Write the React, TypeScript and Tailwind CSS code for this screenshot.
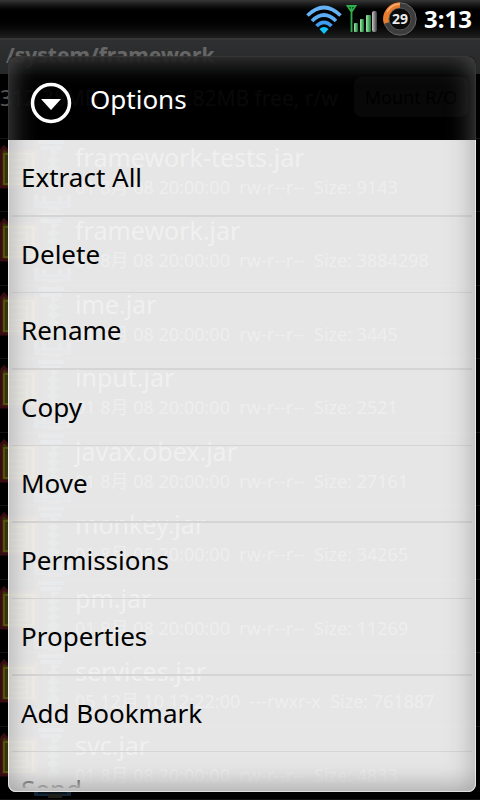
const files = [
  ['framework-tests.jar', '01 8月 08 20:00:00', 'rw-r--r--', '9143'],
  ['framework.jar', '01 8月 08 20:00:00', 'rw-r--r--', '3884298'],
  ['ime.jar', '01 8月 08 20:00:00', 'rw-r--r--', '3445'],
  ['input.jar', '01 8月 08 20:00:00', 'rw-r--r--', '2521'],
  ['javax.obex.jar', '01 8月 08 20:00:00', 'rw-r--r--', '27161'],
  ['monkey.jar', '01 8月 08 20:00:00', 'rw-r--r--', '34265'],
  ['pm.jar', '01 8月 08 20:00:00', 'rw-r--r--', '11269'],
  ['services.jar', '05 12月 10 12:22:00', '---rwxr-x', '761887'],
  ['svc.jar', '01 8月 08 20:00:00', 'rw-r--r--', '4833'],
];

const options = [
  'Extract All',
  'Delete',
  'Rename',
  'Copy',
  'Move',
  'Permissions',
  'Properties',
  'Add Bookmark',
  'Send',
];

function ArchiveIcon() {
  return (
    <svg viewBox="0 0 72 72" className="h-[72px] w-[72px] shrink-0" aria-hidden="true">
      <path d="M1 12 L4 8 L7 11 L37 12 V48 H1 Z" fill="#8a7a20" stroke="#8c2028" strokeWidth="3" />
      <path d="M4 45 V15 H33 V45 Z M9 40 H27 V21 H9 Z M9 28 H25 M9 34 H25" fill="none" stroke="#d8c824" strokeWidth="2" />
      <g opacity="0.75">
        <path d="M38 3 H64 M40 9 H62" stroke="#7494ac" strokeWidth="4" />
        <path d="M50 10 L60 13 L54 17 L60 21 L54 25 L60 29 L54 33 L60 37 L54 41 L60 45 L56 51 H50 L47 45 L52 41 L47 37 L52 33 L47 29 L52 25 L47 21 L52 17 Z" fill="#7c94a4" />
        <path d="M36 64 V56 M44 64 V57 M60 64 V57 M69 64 V56" stroke="#7494ac" strokeWidth="4" />
      </g>
      <path d="M34 62 H71 V69 H34 Z" fill="#2e6090" />
      <path d="M38 66 H67" stroke="#16304c" strokeWidth="2" />
      <path d="M48 67 H62 V71 H48 Z" fill="#4c5440" />
    </svg>
  );
}

function WifiIcon() {
  return (
    <svg viewBox="0 0 36 30" className="h-[30px] w-9" aria-hidden="true">
      <path d="M1.500 11.500 Q18 -4.500 34.500 11.500" fill="none" stroke="#66b2f6" strokeWidth="3.6" />
      <path d="M6 17 Q18 5 30 17" fill="none" stroke="#5cacf4" strokeWidth="3.6" />
      <path d="M10.500 22 Q18 14.500 25.500 22" fill="none" stroke="#3d9cf0" strokeWidth="3.6" />
      <path d="M13.500 25 Q18 21 22.500 25 L18 30 Z" fill="#12c4fa" />
    </svg>
  );
}

function SignalIcon() {
  return (
    <svg viewBox="0 0 32 30" className="h-[30px] w-8" aria-hidden="true">
      <defs>
        <linearGradient id="bar" x1="0" y1="0" x2="1" y2="0">
          <stop offset="0" stopColor="#a4e8b0" />
          <stop offset="1" stopColor="#0f7a2c" />
        </linearGradient>
        <linearGradient id="idle" x1="0" y1="0" x2="1" y2="0">
          <stop offset="0" stopColor="#c8c8c8" />
          <stop offset="1" stopColor="#3a3a3a" />
        </linearGradient>
      </defs>
      <path d="M1.500 2 H9.500 L5.500 8 Z M5.500 2 V28" fill="none" stroke="#2fae4c" strokeWidth="1.800" />
      <rect x="8" y="19" width="4" height="9" rx="1" fill="url(#bar)" />
      <rect x="14" y="15" width="4" height="13" rx="1" fill="url(#bar)" />
      <rect x="20" y="11" width="5" height="17" rx="1" fill="url(#bar)" />
      <rect x="26" y="7" width="5" height="21" rx="2" fill="url(#idle)" />
    </svg>
  );
}

function BatteryIcon() {
  return (
    <svg viewBox="0 0 36 36" className="h-9 w-9" role="img" aria-label="Battery 29 percent">
      <circle cx="18" cy="18" r="13.500" fill="#0a0a0a" stroke="#3c3c3c" strokeWidth="5" />
      <circle cx="18" cy="18" r="16.200" fill="none" stroke="#6a6a6a" strokeWidth="1" />
      <circle cx="18" cy="18" r="11" fill="none" stroke="#555" strokeWidth="1" />
      <path d="M18 4 A14 14 0 0 0 4.500 22" fill="none" stroke="#e87c2c" strokeWidth="5.500" />
      <path d="M18 3 A15 15 0 0 0 5 11" fill="none" stroke="#f8b078" strokeWidth="1.500" />
      <text x="18" y="23" textAnchor="middle" fill="#e8e8e8" fontSize="14" fontWeight="700" fontFamily="Noto Sans, sans-serif">29</text>
    </svg>
  );
}

export default function App() {
  return (
    <div className="relative flex h-screen flex-col overflow-hidden bg-black font-['Noto_Sans','Noto_Sans_CJK_SC',sans-serif] text-white">
      <header className="relative z-10 flex h-[38px] shrink-0 items-center justify-end overflow-hidden bg-linear-to-b from-[#363636] via-black via-35% to-[#1e1e1e] pr-2">
        <div className="flex items-center gap-1">
          <WifiIcon />
          <SignalIcon />
          <BatteryIcon />
          <time className="ml-0.5 text-2xl font-bold">3:13</time>
        </div>
      </header>

      <main className="flex min-h-0 flex-1 flex-col">
        <h1 className="h-9 shrink-0 border-t-2 border-[#888] bg-linear-to-b from-[#74787a] to-[#606466] px-1.5 text-[21px] leading-[30px] font-bold text-white">
          /system/framework
        </h1>
        <div className="flex h-[65px] shrink-0 items-start justify-between border-b border-[#333] pt-[3px] pr-3">
          <p className="text-[21px] leading-[42px] whitespace-nowrap text-[#ccc]">312.38MB used, 36.82MB free, r/w</p>
          <button className="h-10 w-[114px] shrink-0 rounded-lg bg-[#d8d8d8] text-lg whitespace-nowrap text-black">Mount R/O</button>
        </div>
        <ul className="flex min-h-0 flex-1 flex-col">
          {files.map(([name, date, mode, size]) => (
            <li key={name} className="flex min-h-0 flex-1 items-start gap-[3px] border-b border-[#333]">
              <ArchiveIcon />
              <div className="whitespace-nowrap">
                <p className="text-[25px] leading-9">{name}</p>
                <p className="text-lg leading-6 whitespace-pre text-[#ccc]">{`${date}  ${mode}  Size: ${size}`}</p>
              </div>
            </li>
          ))}
        </ul>
      </main>

      <div className="absolute inset-x-0 top-[38px] bottom-0 bg-black/60" />

      <section
        role="dialog"
        aria-labelledby="title"
        className="absolute top-14 right-1 bottom-2 left-2 z-20 flex flex-col overflow-hidden rounded-lg"
      >
        <div className="flex h-[84px] shrink-0 items-center gap-[18px] bg-black/90 pt-0.5 pl-[22px]">
          <svg viewBox="0 0 42 42" className="mt-2 h-[42px] w-[42px]" aria-hidden="true">
            <circle cx="21" cy="21" r="18.500" fill="none" stroke="#fff" strokeWidth="3.500" />
            <path d="M11 17 H31 L21 28 Z" fill="#fff" />
          </svg>
          <h2 id="title" className="text-[26px] leading-8">Options</h2>
        </div>
        <div className="flex min-h-0 flex-1 bg-white/90 px-1 pb-1 text-black">
          <div className="flex-1 overflow-hidden">
            {options.map((label) => (
              <button
                key={label}
                className="block h-[77px] w-full border-b-2 border-[#d5d5d5] px-[9px] text-left text-[26px] even:h-[76px] even:border-b"
              >
                {label}
              </button>
            ))}
          </div>
        </div>
        <div className="pointer-events-none absolute inset-x-0 bottom-0 h-6 bg-linear-to-b from-[#d8d8d8]/0 to-[#d8d8d8]" />
        <div className="pointer-events-none absolute inset-0 rounded-lg border border-white/20 shadow-[inset_0_0_28px_rgba(128,128,128,0.65)]" />
      </section>
    </div>
  );
}
